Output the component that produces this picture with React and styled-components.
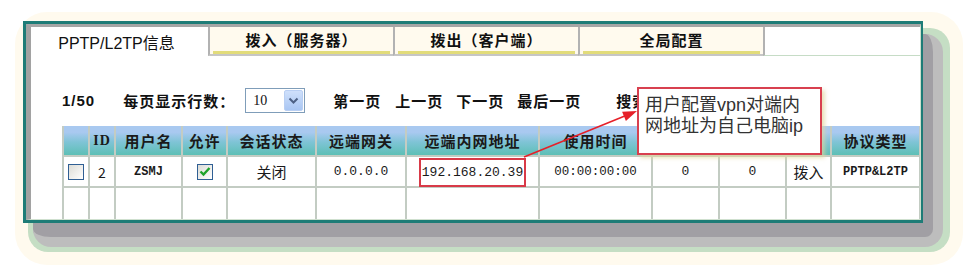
import React from "react";
import styled, { createGlobalStyle } from "styled-components";

const GlobalStyle = createGlobalStyle`
  html, body { margin: 0; padding: 0; background: #ffffff; }
  body { font-family: "Liberation Sans", "Noto Sans CJK SC", sans-serif; color: #111; }
  *, *::before, *::after { box-sizing: border-box; }
`;

const Stage = styled.div`
  position: relative;
  width: 977px;
  height: 276px;
  padding: 12px 0 0 15px;
  overflow: hidden;
`;

const Cream = styled.div`
  width: 948px;
  height: 253px;
  border-radius: 32px;
  background: #fffaee;
  padding: 9px 0 0 8px;
`;

const Frame = styled.div`
  position: relative;
  width: 900px;
  height: 202px;
  &::before {
    content: "";
    position: absolute;
    left: 5px;
    top: 7px;
    right: -27px;
    bottom: -29px;
    border-radius: 20px;
    background: #c5dec4;
  }
  &::after {
    content: "";
    position: absolute;
    left: 10px;
    top: 13px;
    right: -20px;
    bottom: -24px;
    border-radius: 18px;
    background: #a19fa4;
    border-right: 10px solid #bdbdbd;
    border-bottom: 10px solid #bdbdbd;
  }
`;

const Panel = styled.div`
  position: relative;
  z-index: 1;
  width: 100%;
  height: 100%;
  border: 3px solid #1e7c77;
  background: #ffffff;
  display: flex;
`;

const Bevel = styled.div`
  flex: 1;
  display: flex;
  flex-direction: column;
  border-style: solid;
  border-width: 3px 1px 1px 5px;
  border-color: #a6a6a6 #cfe0cf #cfe0cf #a2a2a2;
`;

const TabBar = styled.div`
  display: flex;
  height: 30px;
`;

const Tab = styled.div`
  width: ${(p) => p.$w}px;
  display: flex;
  align-items: center;
  justify-content: center;
  font-family: "Noto Sans CJK SC", sans-serif;
  font-weight: bold;
  font-size: 15px;
  letter-spacing: 1px;
  color: #111;
  border-left: 2px solid #b2b2b2;
  border-bottom: 2px solid #c6c6c6;
  padding-bottom: 3px;
  background: linear-gradient(#e2dc7a, #e2dc7a) no-repeat 3px 100% / calc(100% - 6px) 3px,
    #fffaee;
`;

const ActiveTab = styled.div`
  width: ${(p) => p.$w}px;
  display: flex;
  align-items: center;
  justify-content: center;
  padding-right: 6px;
  font-size: 16px;
  color: #111;
  background: #ffffff;
`;

const EmptyTab = styled.div`
  flex: 1;
  background: #ffffff;
  border-left: 2px solid #b2b2b2;
  border-bottom: 1px solid #c6dcc6;
`;

const Body = styled.div`
  padding: 32px 0 0 31px;
`;

const Pager = styled.div`
  display: flex;
  align-items: center;
  height: 25px;
  font-size: 15px;
  font-weight: bold;
  letter-spacing: 1px;
  color: #111;
`;

const PagerItem = styled.span`
  margin-left: ${(p) => p.$ml || 0}px;
  white-space: nowrap;
  font-family: ${(p) =>
    p.$latin ? '"Liberation Sans", sans-serif' : '"Noto Sans CJK SC", sans-serif'};
`;

const SelectBox = styled.div`
  margin-left: 10px;
  width: 60px;
  height: 25px;
  border: 1px solid #7f9db9;
  background: #fff;
  display: flex;
  align-items: center;
  justify-content: space-between;
  padding: 1px 1px 1px 7px;
  font-family: "Liberation Serif", serif;
  font-weight: normal;
  font-size: 14px;
  letter-spacing: 0;
`;

const SelectButton = styled.div`
  width: 19px;
  height: 21px;
  border-radius: 2px;
  background: linear-gradient(#cfe0fb, #a9c6f3);
  border: 1px solid #b9cff3;
  display: flex;
  align-items: center;
  justify-content: center;
`;

const Grid = styled.div`
  margin-top: 13px;
  display: grid;
  grid-template-columns: ${(p) => p.$cols};
  grid-template-rows: 29px 29px 31px;
  gap: 2px;
  padding-left: 2px;
  background: #c3ccc3;
  width: 858px;
`;

const HeadCell = styled.div`
  background: linear-gradient(#a9c9f0 0%, #a9c9f0 22%, #7fc4d6 55%, #5dbfb5 100%);
  display: flex;
  align-items: center;
  justify-content: center;
  font-family: ${(p) => (p.$serif ? '"Liberation Serif", serif' : '"Noto Sans CJK SC", sans-serif')};
  font-weight: bold;
  font-size: ${(p) => (p.$serif ? 14 : 15)}px;
  letter-spacing: 1px;
  color: #1a1a1a;
  white-space: nowrap;
`;

const Cell = styled.div`
  background: #ffffff;
  display: flex;
  align-items: center;
  justify-content: center;
  color: #1a1a1a;
  white-space: nowrap;
  font-family: ${(p) =>
    p.$mono ? '"Liberation Mono", monospace' : '"Noto Sans CJK SC", sans-serif'};
  font-size: ${(p) => p.$size || 15}px;
  font-weight: ${(p) => (p.$bold ? "bold" : "normal")};
`;

const IpMark = styled.span`
  display: inline-block;
  border: 2px solid #d83a48;
  padding: 2px 1px 1px 1px;
  line-height: 22px;
  margin-top: 1px;
`;

const Check = styled.span`
  width: 16px;
  height: 16px;
  border: 1px solid #2f5f94;
  background: linear-gradient(135deg, #dcdcd6, #ffffff);
  display: flex;
  align-items: center;
  justify-content: center;
`;

const Callout = styled.div`
  position: absolute;
  left: 637px;
  top: 87px;
  width: 185px;
  height: 68px;
  z-index: 3;
  background: #ffffff;
  border: 2px solid #d8404f;
  box-shadow: 3px 3px 4px rgba(225, 215, 160, 0.7);
  padding: 6px 0 0 6px;
  font-family: "Liberation Sans", "Noto Sans CJK SC", sans-serif;
  font-size: 18px;
  line-height: 21px;
  color: #333;
  white-space: nowrap;
`;

const ArrowLayer = styled.svg`
  position: absolute;
  left: 0;
  top: 0;
  z-index: 2;
  pointer-events: none;
`;

const widths = [24, 24, 65, 43, 87, 88, 131, 111, 65, 65, 43, 87];
const heads = ["", "ID", "用户名", "允许", "会话状态", "远端网关", "远端内网地址", "使用时间", "", "", "", "协议类型"];

const CheckMark = () => (
  <svg width="12" height="11" viewBox="0 0 12 11">
    <path d="M1.5 5.5 L4.5 8.5 L10.5 2" fill="none" stroke="#1fa32a" strokeWidth="2.4" />
  </svg>
);

export default function App() {
  return (
    <>
      <GlobalStyle />
      <Stage>
        <Cream>
          <Frame>
            <Panel>
              <Bevel>
                <TabBar>
                  <ActiveTab $w={177}>PPTP/L2TP信息</ActiveTab>
                  <Tab $w={185}>拨入（服务器）</Tab>
                  <Tab $w={185}>拨出（客户端）</Tab>
                  <Tab $w={185}>全局配置</Tab>
                  <EmptyTab />
                </TabBar>
                <Body>
                  <Pager>
                    <PagerItem $latin>1/50</PagerItem>
                    <PagerItem $ml={28}>每页显示行数：</PagerItem>
                    <SelectBox>
                      10
                      <SelectButton>
                        <svg width="11" height="8" viewBox="0 0 11 8">
                          <path d="M1.5 1.5 L5.5 5.5 L9.5 1.5" fill="none" stroke="#4d6185" strokeWidth="2" />
                        </svg>
                      </SelectButton>
                    </SelectBox>
                    <PagerItem $ml={28}>第一页</PagerItem>
                    <PagerItem $ml={14}>上一页</PagerItem>
                    <PagerItem $ml={13}>下一页</PagerItem>
                    <PagerItem $ml={13}>最后一页</PagerItem>
                    <PagerItem $ml={35}>搜索</PagerItem>
                  </Pager>
                  <Grid $cols={widths.map((w) => w + "px").join(" ")}>
                    {heads.map((h, i) => (
                      <HeadCell key={i} $serif={h === "ID"}>{h}</HeadCell>
                    ))}
                    <Cell><Check /></Cell>
                    <Cell $size={14}>2</Cell>
                    <Cell $mono $bold $size={12}>ZSMJ</Cell>
                    <Cell><Check><CheckMark /></Check></Cell>
                    <Cell $size={15}>关闭</Cell>
                    <Cell $mono $size={13}>0.0.0.0</Cell>
                    <Cell $mono $size={13}><IpMark>192.168.20.39</IpMark></Cell>
                    <Cell $mono $size={12.5}>00:00:00:00</Cell>
                    <Cell $mono $size={13}>0</Cell>
                    <Cell $mono $size={13}>0</Cell>
                    <Cell $size={15}>拨入</Cell>
                    <Cell $mono $bold $size={12}>PPTP&amp;L2TP</Cell>
                    {widths.map((_, i) => (
                      <Cell key={"e" + i} />
                    ))}
                  </Grid>
                </Body>
              </Bevel>
            </Panel>
          </Frame>
        </Cream>
        <ArrowLayer width="977" height="276" viewBox="0 0 977 276">
          <line x1="524" y1="157" x2="626" y2="115.5" stroke="#e62029" strokeWidth="1.6" />
          <polygon points="637,111 625.9,120.9 622.1,111.7" fill="#e62029" />
        </ArrowLayer>
        <Callout>
          用户配置vpn对端内
          <br />
          网地址为自己电脑ip
        </Callout>
      </Stage>
    </>
  );
}
